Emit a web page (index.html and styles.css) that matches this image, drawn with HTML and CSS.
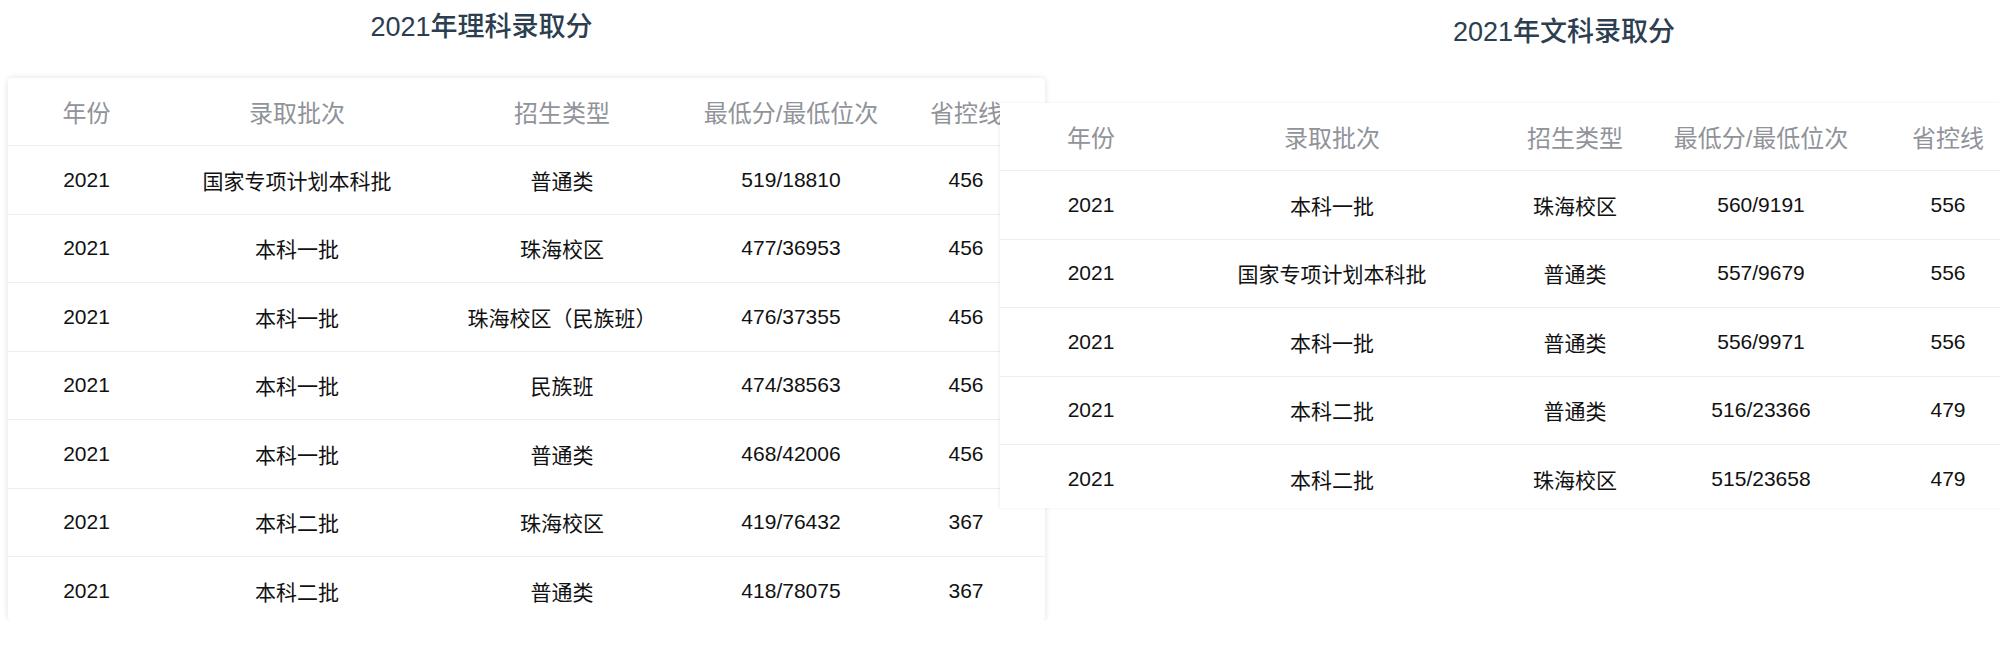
FILE: index.html
```html
<!DOCTYPE html>
<html lang="zh-CN">
<head>
<meta charset="utf-8">
<title>2021年录取分</title>
<link rel="stylesheet" href="styles.css">
</head>
<body>
<div class="page">
  <section class="panel panel-left">
    <h2 class="title title-left">2021年理科录取分</h2>
    <div class="card card-left">
      <table class="score-table table-left">
        <colgroup>
          <col class="c1"><col class="c2"><col class="c3"><col class="c4"><col class="c5">
        </colgroup>
        <thead>
          <tr><th>年份</th><th>录取批次</th><th>招生类型</th><th>最低分/最低位次</th><th>省控线</th></tr>
        </thead>
        <tbody>
          <tr><td>2021</td><td>国家专项计划本科批</td><td>普通类</td><td>519/18810</td><td>456</td></tr>
          <tr><td>2021</td><td>本科一批</td><td>珠海校区</td><td>477/36953</td><td>456</td></tr>
          <tr><td>2021</td><td>本科一批</td><td>珠海校区（民族班）</td><td>476/37355</td><td>456</td></tr>
          <tr><td>2021</td><td>本科一批</td><td>民族班</td><td>474/38563</td><td>456</td></tr>
          <tr><td>2021</td><td>本科一批</td><td>普通类</td><td>468/42006</td><td>456</td></tr>
          <tr><td>2021</td><td>本科二批</td><td>珠海校区</td><td>419/76432</td><td>367</td></tr>
          <tr><td>2021</td><td>本科二批</td><td>普通类</td><td>418/78075</td><td>367</td></tr>
        </tbody>
      </table>
    </div>
  </section>
  <section class="panel panel-right">
    <h2 class="title title-right">2021年文科录取分</h2>
    <div class="card card-right">
      <table class="score-table table-right">
        <colgroup>
          <col class="c1"><col class="c2"><col class="c3"><col class="c4"><col class="c5">
        </colgroup>
        <thead>
          <tr><th>年份</th><th>录取批次</th><th>招生类型</th><th>最低分/最低位次</th><th>省控线</th></tr>
        </thead>
        <tbody>
          <tr><td>2021</td><td>本科一批</td><td>珠海校区</td><td>560/9191</td><td>556</td></tr>
          <tr><td>2021</td><td>国家专项计划本科批</td><td>普通类</td><td>557/9679</td><td>556</td></tr>
          <tr><td>2021</td><td>本科一批</td><td>普通类</td><td>556/9971</td><td>556</td></tr>
          <tr><td>2021</td><td>本科二批</td><td>普通类</td><td>516/23366</td><td>479</td></tr>
          <tr><td>2021</td><td>本科二批</td><td>珠海校区</td><td>515/23658</td><td>479</td></tr>
        </tbody>
      </table>
    </div>
  </section>
</div>
</body>
</html>
```

FILE: styles.css
```css
html, body {
  margin: 0;
  padding: 0;
  background: #fff;
  overflow: hidden;
}

body {
  font-family: "Liberation Sans", "Noto Sans CJK SC", sans-serif;
  color: #111;
}

.page {
  display: flex;
  align-items: flex-start;
  padding-left: 8px;
  padding-top: 8px;
  width: 2000px;
  box-sizing: border-box;
}

.panel {
  display: flex;
  flex-direction: column;
}

.panel-left {
  width: 992px;
  flex: none;
}

.panel-right {
  flex: 1;
  min-width: 0;
  position: relative;
}

.title {
  margin: 0;
  font-size: 27px;
  line-height: 38px;
  font-weight: 500;
  color: #2c3e50;
  text-align: center;
}

.title-left {
  padding-right: 45px;
}

.title-right {
  padding-top: 5px;
  padding-left: 128px;
}

.card {
  background: #fff;
  border-radius: 4px;
  box-shadow: 0 0 6px rgba(0, 0, 0, 0.12);
  overflow: hidden;
  flex: none;
}

.card-left {
  width: 1037px;
  height: 542px;
  margin-top: 32px;
}

.card-right {
  width: 100%;
  height: 405px;
  margin-top: 52px;
  border-radius: 0;
  box-shadow: -1px 0 3px rgba(0, 0, 0, 0.07);
}

.score-table {
  border-collapse: collapse;
  table-layout: fixed;
}

.table-left { width: 1037px; }
.table-right { width: 1042px; }

.score-table th,
.score-table td {
  padding: 0;
  text-align: center;
  white-space: nowrap;
  border-bottom: 1px solid #ebeef5;
}

.score-table th {
  height: 67px;
  font-size: 24px;
  font-weight: 400;
  color: #909399;
}

.score-table td {
  height: 67.5px;
  font-size: 21px;
  color: #111;
}

.table-left .c1 { width: 157px; }
.table-left .c2 { width: 264px; }
.table-left .c3 { width: 266px; }
.table-left .c4 { width: 192px; }
.table-left .c5 { width: 158px; }

.table-right .c1 { width: 182px; }
.table-right .c2 { width: 300px; }
.table-right .c3 { width: 186px; }
.table-right .c4 { width: 186px; }
.table-right .c5 { width: 188px; }
```
